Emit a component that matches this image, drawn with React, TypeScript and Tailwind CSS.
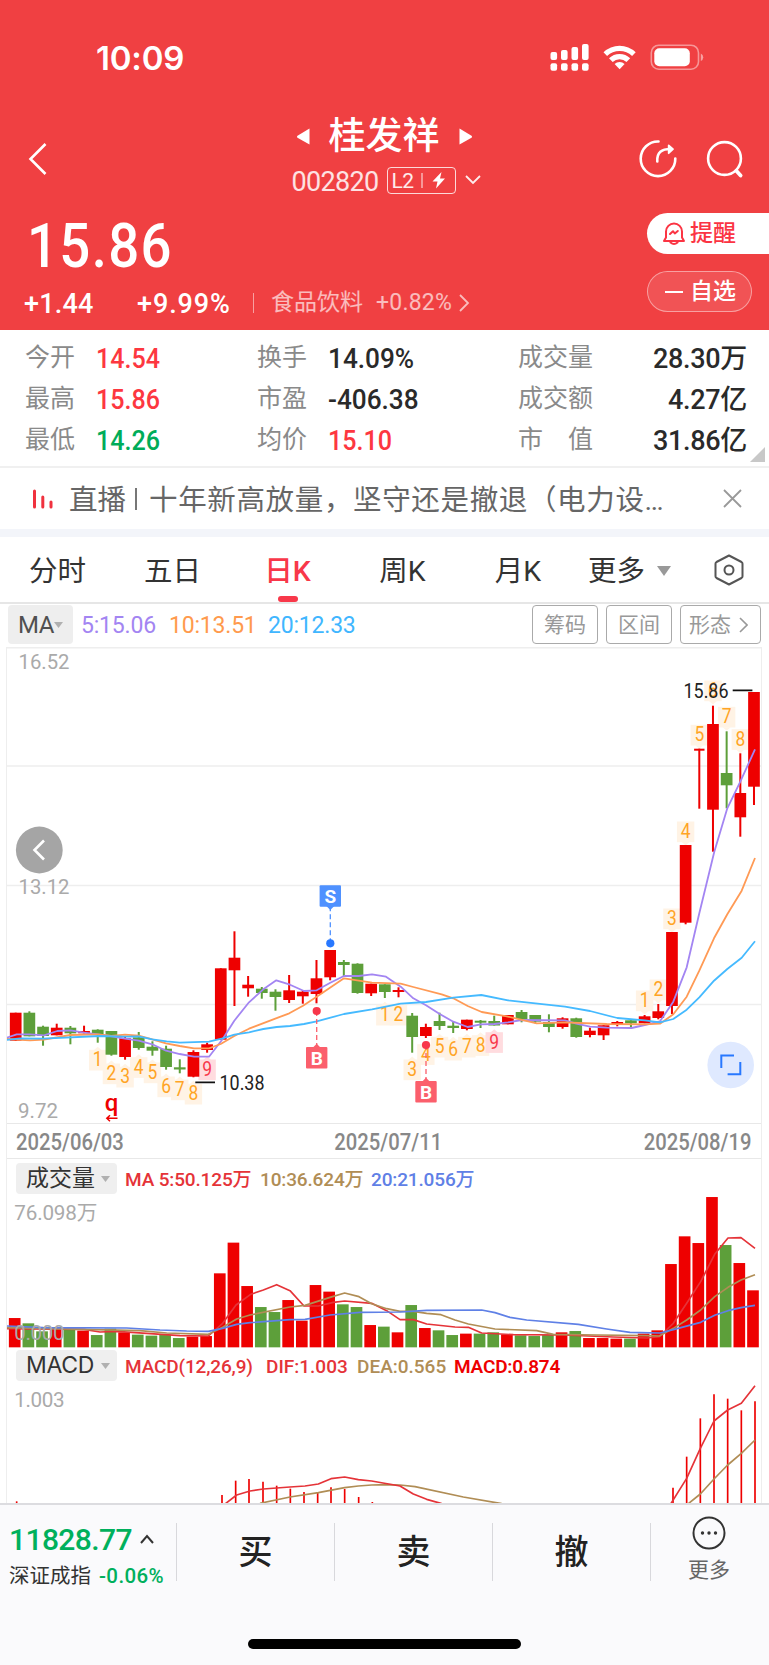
import React from "react";
import clsx from "clsx";

// --- Types ---
type Side = "up" | "down";

// top / bottom of the body, high / low of the wick
type Candle = [Side, number, number, number, number];

interface Quote {
  label: string;
  value: string;
  tone: string;
}

interface Signal {
  index: number;
  text: string;
  y: number;
  above?: boolean;
}

// --- Data ---
const RED = "#ee0000";
const GREEN = "#5d9f3a";
const STEP = 13.672;
const cx = (i: number) => 15.7 + i * STEP;

const quoteColumns: Quote[][] = [
  [
    { label: "今开", value: "14.54", tone: "text-[#fd3740]" },
    { label: "最高", value: "15.86", tone: "text-[#fd3740]" },
    { label: "最低", value: "14.26", tone: "text-[#00ac59]" },
  ],
  [
    { label: "换手", value: "14.09%", tone: "text-[#2a2a2a]" },
    { label: "市盈", value: "-406.38", tone: "text-[#2a2a2a]" },
    { label: "均价", value: "15.10", tone: "text-[#fd3740]" },
  ],
  [
    { label: "成交量", value: "28.30万", tone: "text-[#2a2a2a]" },
    { label: "成交额", value: "4.27亿", tone: "text-[#2a2a2a]" },
    { label: "市　值", value: "31.86亿", tone: "text-[#2a2a2a]" },
  ],
];

const candles: Candle[] = [
  ["up", 1012.7, 1040.7, 1012.7, 1041],
  ["down", 1012.7, 1036.3, 1011.3, 1036.3],
  ["down", 1026.7, 1036, 1025.7, 1045.7],
  ["up", 1027.7, 1035.3, 1023.7, 1035.3],
  ["down", 1027.7, 1033.3, 1026, 1044.3],
  ["up", 1031, 1033.3, 1025.7, 1033.3],
  ["down", 1029.7, 1035, 1029.3, 1042.7],
  ["down", 1031, 1054.7, 1031, 1055.7],
  ["up", 1038.3, 1057, 1036, 1059.7],
  ["down", 1037.3, 1048, 1032, 1049.7],
  ["down", 1046.7, 1050.7, 1041.3, 1055.7],
  ["down", 1048.7, 1067, 1045.7, 1069.7],
  ["down", 1067.3, 1069.5, 1059.3, 1073.3],
  ["up", 1052, 1076.7, 1050.3, 1077.3],
  ["up", 1044.3, 1050, 1042.7, 1052.7],
  ["up", 968.3, 1039.7, 968.3, 1039.7],
  ["up", 957.7, 970.3, 931.3, 1006],
  ["up", 984.7, 988.3, 976, 996.7],
  ["down", 988.7, 993, 987, 998.7],
  ["down", 991.7, 997, 989.3, 1010.7],
  ["up", 990.3, 1000, 975, 1003],
  ["up", 991.7, 996.3, 990, 1003.7],
  ["up", 978.3, 994, 960, 1003.3],
  ["up", 950, 977.3, 950, 980.3],
  ["down", 962, 965, 960, 976.7],
  ["down", 963.7, 993, 963.3, 993.7],
  ["up", 983.7, 993.3, 983.7, 996],
  ["down", 984.3, 992, 984.3, 998],
  ["up", 990, 992, 987.3, 997.3],
  ["down", 1015.7, 1037, 1013, 1052.7],
  ["up", 1027, 1036, 1023.7, 1038],
  ["down", 1021, 1026, 1012.7, 1030],
  ["down", 1025.7, 1028, 1022, 1033],
  ["up", 1019.7, 1029, 1019.7, 1030.3],
  ["down", 1020.7, 1022.7, 1020, 1028],
  ["down", 1021, 1025.5, 1015.7, 1025.5],
  ["up", 1015, 1024.3, 1015, 1024.3],
  ["down", 1012, 1019, 1010, 1022.3],
  ["down", 1015, 1021.7, 1015, 1023.3],
  ["down", 1022, 1027, 1014.3, 1032.3],
  ["up", 1018.3, 1027, 1017.3, 1028.7],
  ["down", 1018.3, 1037, 1017.7, 1037.7],
  ["up", 1030.7, 1035, 1027.7, 1037.3],
  ["up", 1025.3, 1035.3, 1025.3, 1040],
  ["up", 1022, 1024.7, 1021, 1026.3],
  ["down", 1020.3, 1023.3, 1020.3, 1027],
  ["up", 1016.3, 1023.3, 1015, 1023.3],
  ["up", 1011.3, 1018, 1004, 1019.3],
  ["up", 932, 1006, 932, 1014],
  ["up", 845, 922.7, 845, 924.3],
  ["up", 748.7, 750.7, 748.7, 808.7],
  ["up", 724, 809.7, 705.7, 851.7],
  ["down", 773, 785.3, 731.3, 808.3],
  ["up", 793, 817.3, 753.3, 836.7],
  ["up", 692, 786.7, 692, 805],
];

const ma5 =
  "6.7,1037.7 16.7,1034.3 30,1034.3 44,1035.3 57.3,1031 70.3,1030.3 84,1032.7 110,1036 125,1038.7 138.7,1040.7 152.3,1044.3 166,1050.7 179.7,1054 194,1056.7 209,1056.7 222.7,1039 234.3,1020.7 249,1002.3 263.3,989.3 276.3,980.3 290,984.7 304,991 316.7,990.3 330.3,982.7 344,976 358.7,976 372,974.3 386,976.7 400.7,986.7 413.3,998.3 426,1005.3 439.7,1014 453.3,1021.7 467.7,1027 480.7,1024.3 494.3,1024 508,1022.3 521.7,1020 565,1020.3 576.3,1023.7 590,1026.7 606.7,1027.7 631.7,1028 644.7,1025 660,1021.3 673.3,1001.7 686.7,967.3 699.3,913.3 714.3,851.7 727.3,808.3 740.3,781.7 755,749.3";
const ma10 =
  "6.7,1039 30,1040.3 44,1039.7 70.3,1035 97.7,1034.3 111.3,1036 125,1034.7 138.7,1035.7 152.3,1039.3 166,1043.3 179.7,1046 194,1048.3 209,1048.3 220.7,1044 234.3,1036 249,1028.7 275.3,1018.7 289.3,1013.3 303,1005.7 316.7,996.7 344,978.3 372,982.7 400.7,983.7 413.3,987 441.7,994.3 453.3,998.3 467.7,1006 481.7,1012 506.7,1016.3 536.7,1023.3 565,1022.3 606.7,1024 644.7,1024.3 660,1023.7 673.3,1014.3 686.7,996.7 699.3,970.7 714,938.3 727.3,914.3 741.7,890.7 755,858";
const ma20 =
  "6.7,1040 20,1038.3 43.3,1038.7 100,1036 125,1036.7 138.7,1036.3 152.3,1039.3 166.7,1041.3 179.7,1042.7 209,1041.7 222.7,1038.3 234.3,1034.7 249,1032.3 263.3,1029 276.7,1027 290,1026 304,1024 316.7,1021.3 344,1014 372,1009.3 400.7,1003.7 426,1002 453.3,997.7 481.3,995 508,1000.3 535.3,1003.3 565,1006.7 590,1011 617.3,1018 644.7,1020.3 660,1022.3 673.3,1019 686.7,1009.7 699.3,997.3 714,980.7 727.3,969 741.7,957.7 755,941.3";

const signals: Signal[] = [
  { index: 6, text: "1", y: 1066.3 },
  { index: 7, text: "2", y: 1080 },
  { index: 8, text: "3", y: 1083.3 },
  { index: 9, text: "4", y: 1073.7 },
  { index: 10, text: "5", y: 1079 },
  { index: 11, text: "6", y: 1093 },
  { index: 12, text: "7", y: 1096 },
  { index: 13, text: "8", y: 1100.3 },
  { index: 14, text: "9", y: 1076 },
  { index: 27, text: "1", y: 1021.3 },
  { index: 28, text: "2", y: 1021.3 },
  { index: 29, text: "3", y: 1076 },
  { index: 30, text: "4", y: 1060.7 },
  { index: 31, text: "5", y: 1053.3 },
  { index: 32, text: "6", y: 1056.3 },
  { index: 33, text: "7", y: 1053.3 },
  { index: 34, text: "8", y: 1051.7 },
  { index: 35, text: "9", y: 1048.7 },
  { index: 46, text: "1", y: 1007, above: true },
  { index: 47, text: "2", y: 996, above: true },
  { index: 48, text: "3", y: 925, above: true },
  { index: 49, text: "4", y: 838, above: true },
  { index: 50, text: "5", y: 741.3, above: true },
  { index: 51, text: "6", y: 697, above: true },
  { index: 52, text: "7", y: 723.3, above: true },
  { index: 53, text: "8", y: 745.7, above: true },
];

// bar heights, one for each candle
const volumes = [
  29.3, 24, 16, 18.3, 17.7, 16.7, 12.3, 18.7, 15, 12.7, 11.7, 12.3, 9.3, 10.7,
  11.3, 74, 104.7, 61.3, 40.3, 35.3, 47.3, 26.7, 62.3, 55.7, 43, 40.3, 22.3,
  20.7, 15, 42.3, 19.3, 17, 12.3, 13.7, 13.7, 15, 13, 12, 11.3, 12.3, 15, 16.3,
  9.3, 9.3, 8.7, 8.7, 13.7, 17, 83.3, 111, 104.3, 150.3, 102.3, 84.3, 57,
];

// volume and MACD panes are drawn on a grid three times finer than the page
const volMa5 =
  "20,656 252,658 300,666 350,664 540,677 625,678 668,640 708,585 752,553 790,540 830,524 870,542 912,588 955,588 1000,577 1034,573 1115,580 1160,602 1200,629 1240,629 1280,642 1365,651 1405,652 1445,669 1540,674 1690,675 1840,681 1940,684 1978,680 2020,640 2060,580 2102,515 2144,433 2184,384 2223,383 2265,415";
const volMa10 =
  "20,653 250,658 420,662 500,669 625,673 668,652 710,627 750,615 870,591 915,586 990,562 1034,549 1077,560 1115,581 1160,596 1200,604 1240,604 1280,610 1323,614 1365,630 1405,642 1485,657 1610,662 1660,673 1790,675 1940,677 1978,678 2020,655 2060,630 2102,600 2144,560 2184,532 2223,510 2265,494";
const volMa20 =
  "20,648 130,653 380,654 480,660 560,663 625,664 668,655 710,643 750,638 870,629 915,628 990,615 1080,607 1200,606 1280,601 1445,600 1485,608 1530,622 1580,630 1735,643 1820,657 1890,667 1980,669 2020,659 2102,637 2144,616 2184,602 2223,593 2265,586";

const macdBars: [number, number][] = [
  [50, 1174], [666, 1155], [707, 1112], [747, 1107], [789, 1115], [830, 1127],
  [871, 1136], [912, 1146], [953, 1147], [993, 1132], [1034, 1137],
  [1076, 1161], [1117, 1176], [2019, 1133], [2060, 1040], [2101, 925],
  [2142, 853], [2183, 866], [2224, 901], [2265, 874],
];
const dif = [
  "675,1182 710,1155 750,1143 790,1137 870,1131 915,1128 955,1122 993,1106 1034,1101 1075,1109 1115,1113 1200,1128 1240,1152 1280,1168 1325,1181",
  "2012,1182 2060,1105 2101,1015 2142,933 2183,900 2224,880 2265,827",
];
const dea = [
  "780,1180 870,1161 955,1148 1034,1133 1075,1128 1115,1125 1160,1124 1200,1125 1245,1130 1390,1161 1505,1181",
  "2065,1181 2101,1152 2142,1107 2183,1065 2224,1030 2265,990",
];

const tabs = [
  { name: "分时", cell: "w-[115px]" },
  { name: "五日", cell: "w-[115px]" },
  { name: "日K", cell: "w-[115px]", active: true },
  { name: "周K", cell: "w-[115px]" },
  { name: "月K", cell: "w-[116px]" },
];

// --- Components ---

const StatusBar = () => (
  <div className="flex h-[116px] items-start pl-[96px] pr-[65px] pt-[42px]">
    <span className="font-[Inter] text-[33px] leading-[33px] font-semibold tracking-[-0.200px]">
      10:09
    </span>
    <svg className="ml-auto" width="155" height="32" viewBox="550 42 155 32" fill="white">
      {[0, 1, 2, 3].map((i) => (
        <g key={i}>
          <rect x={551.5 + i * 10.5} y={52 - [0, 2, 5, 8][i]} width="6.6" height={8 + [0, 2, 5, 8][i]} rx="2" />
          <rect x={551.5 + i * 10.5} y="63.3" width="6.6" height="7.4" rx="2" />
        </g>
      ))}
      <path d="M604.5 52.3a23.2 23.2 0 0 1 32.2 0l-3.6 3.8a18 18 0 0 0-25 0z" />
      <path d="M610 58.2a15.3 15.3 0 0 1 21.200 0l-3.7 3.8a10 10 0 0 0-13.800 0z" />
      <path d="M615.600 64a7.300 7.300 0 0 1 10 0l-5 5.200z" />
      <rect x="652.300" y="45.200" width="47.200" height="24" rx="7.500" fill="none" stroke="white" strokeOpacity=".45" strokeWidth="1.600" />
      <rect x="655.300" y="48.200" width="35.500" height="18" rx="5" />
      <path d="M701.800 53.500q2.400 1 2.400 3.700t-2.400 3.700z" fillOpacity=".5" />
    </svg>
  </div>
);

const TitleBar = () => (
  <div className="flex h-[93px] items-start">
    <svg className="ml-[26px] mt-[25px]" width="26" height="36" viewBox="26 141 26 36" fill="none" stroke="white" strokeWidth="2.600">
      <path d="M45.500 144 30.500 159 45.500 174" />
    </svg>
    <div className="ml-[222px] flex w-[220px] flex-col items-center">
      <div className="flex h-[40px] items-center gap-[19px]">
        <svg width="13" height="17" viewBox="0 0 13 17" fill="white">
          <path d="M12.500.5v16L.5 9.700q-1-1 0-2z" />
        </svg>
        <span className="pt-[2px] text-[37px] leading-[40px] font-medium">桂发祥</span>
        <svg width="13" height="17" viewBox="0 0 13 17" fill="white">
          <path d="M.5.5v16l12-6.800q1-1 0-2z" />
        </svg>
      </div>
      <div className="mt-[10px] flex h-[28px] items-center pl-[5px]">
        <span className="pt-[3px] text-[27px] leading-7 tracking-[-0.700px] text-white/85">002820</span>
        <span className="ml-[9px] flex h-[27px] w-[69px] items-center rounded-[4px] border-[1.500px] border-white/80 pl-[3px]">
          <span className="pt-px text-[21px] leading-6 tracking-[-0.5px] text-white/90">L2</span>
          <svg width="36" height="22" viewBox="0 0 36 22">
            <path d="M8 4v15" stroke="white" strokeOpacity=".7" strokeWidth="1.300" />
            <path d="m27.500 3-9 9.500h5L22 19.500l9-10h-5z" fill="white" />
          </svg>
        </span>
        <svg className="ml-[9px]" width="16" height="10" viewBox="0 0 16 10" fill="none" stroke="white" strokeOpacity=".9" strokeWidth="1.800">
          <path d="m1 1 7 7 7-7" />
        </svg>
      </div>
    </div>
    <svg className="ml-[141px] mt-[20px]" width="112" height="46" viewBox="636 136 112 46" fill="none" stroke="white" strokeWidth="2.600" strokeLinecap="round">
      <path d="M659.500 141.500a17.300 17.300 0 1 0 16.800 17" />
      <path d="M658.300 161.500c-.5-9 4-12.700 14-12.500" />
      <path d="M669.700 145.500l4.300 3.700-4.300 4z" fill="white" strokeWidth="1.800" strokeLinejoin="round" />
      <circle cx="725.500" cy="158.500" r="16.400" />
      <path d="m737.300 170.800 4.300 4.700" strokeWidth="3.800" />
    </svg>
  </div>
);

const PriceBlock = () => (
  <div className="flex h-[121px]">
    <div className="w-[647px]">
      <div className="mt-[5px] ml-[27px] w-[200px] origin-left scale-x-[0.880] text-[62px] leading-[64px] font-medium tracking-[1.500px]">
        15.86
      </div>
      <div className="mt-[9px] flex h-[32px] items-center pl-[24px]">
        <span className="w-[113px] pt-[2px] text-[27px] font-medium tracking-[0.200px]">+1.44</span>
        <span className="w-[116px] pt-[2px] text-[27px] font-medium tracking-[0.900px]">+9.99%</span>
        <span className="h-5 w-px bg-white/50" />
        <span className="ml-[17px] text-[23px] text-white/65">食品饮料</span>
        <span className="ml-[13px] text-[23px] tracking-[0.200px] text-white/65">+0.82%</span>
        <svg className="ml-[6px]" width="12" height="18" viewBox="0 0 12 18" fill="none" stroke="white" strokeOpacity=".65" strokeWidth="1.800">
          <path d="m2 1 8 8-8 8" />
        </svg>
      </div>
    </div>
    <div className="flex w-[122px] flex-col pt-[4px]">
      <button className="flex h-[41px] items-center rounded-l-full bg-white pl-[15px] text-[23px] font-medium text-[#fb3443]">
        <svg className="mr-[4px]" width="24" height="25" viewBox="0 0 24 25" fill="none" stroke="currentColor" strokeWidth="2" strokeLinejoin="round" strokeLinecap="round">
          <path d="M4 16.500V10.500a8 8 0 0 1 16 0v6l2 3.500H2z" />
          <path d="M8.500 21.500q3.500 3 7 0" />
          <path d="m8 13 3-2.800 1.800 2.300 3-2.500" />
        </svg>
        <span className="pt-[2px]">提醒</span>
      </button>
      <button className="mt-[17px] flex h-[41px] w-[105px] items-center rounded-full border-[1.500px] border-white/45 bg-white/10 pl-[17px] text-[23px] font-medium">
        <span className="mr-[7px] h-[2px] w-[18px] bg-white" />
        <span className="pt-[2px]">自选</span>
      </button>
    </div>
  </div>
);

const Quotes = () => (
  <div className="relative flex h-[138px] border-b-2 border-[#f0f0f0] pt-[7px] pl-[25px]">
    {quoteColumns.map((col, c) => (
      <div key={c} className={["w-[232px]", "w-[261px]", "w-[229px]"][c]}>
        {col.map((q) => (
          <div key={q.label} className="flex h-[41px] items-center">
            <span className={clsx("text-[25px] leading-8 text-[#8a8a8a]", c < 2 && "w-[71px]")}>
              {q.label}
            </span>
            <span
              className={clsx(
                "pt-[3px] text-[27px] leading-8 font-medium",
                q.tone,
                c === 2 ? "ml-auto tracking-[-0.300px]" : "origin-left",
                q.value.length === 5 && c < 2 && "scale-x-[0.930]",
                q.value.length > 5 && c < 2 && "scale-x-[0.970]",
              )}
            >
              {q.value}
            </span>
          </div>
        ))}
      </div>
    ))}
    <svg className="absolute right-[4px] bottom-[4px]" width="15" height="15" viewBox="0 0 15 15" fill="#c8c8c8">
      <path d="M15 0v15H0z" />
    </svg>
  </div>
);

const Notice = () => (
  <div className="flex h-[61px] items-center">
    <svg className="ml-[32px]" width="22" height="20" viewBox="0 0 22 20" stroke="#f0323f" strokeWidth="3" strokeLinecap="round">
      <path d="M2.500 2v16M10.800 8v10M19 13v5" />
    </svg>
    <span className="ml-[15px] w-[610px] pt-[5px] text-[28.500px] leading-10 whitespace-nowrap text-[#666]">
      直播<span className="mx-[9px] inline-block h-[22px] w-[2px] bg-[#777]" />
      <span className="ml-[3px] tracking-[0.650px]">十年新高放量，坚守还是撤退（电力设…</span>
    </span>
    <svg className="ml-auto mr-[27px]" width="19" height="19" viewBox="0 0 19 19" stroke="#999" strokeWidth="1.800">
      <path d="m1 1 17 17M18 1 1 18" />
    </svg>
  </div>
);

const Tabs = () => (
  <div className="flex h-[67px] items-center border-b-2 border-[#e6e6e6] text-[28.500px] text-[#333]">
    {tabs.map((t) => (
      <div
        key={t.name}
        className={clsx("relative flex h-full items-center justify-center pt-[5px]", t.cell, t.active && "font-medium text-[#f8384a]")}
      >
        {t.name}
        {t.active && <span className="absolute bottom-0 h-[6px] w-5 rounded-[3px] bg-[#f8384a]" />}
      </div>
    ))}
    <span className="ml-[12px] pt-[5px]">更多</span>
    <svg className="ml-[12px] mt-[2px]" width="14" height="10" viewBox="0 0 14 10" fill="#999">
      <path d="M0 0h14L7 10z" />
    </svg>
    <svg className="ml-[43px]" width="30" height="32" viewBox="0 0 30 32" fill="none" stroke="#555" strokeWidth="2">
      <path d="M15 1.500 27.500 8q1 .6 1 1.800v12.400q0 1.200-1 1.800L15 30.500 2.500 24q-1-.6-1-1.800V9.800q0-1.200 1-1.800z" strokeLinejoin="round" />
      <circle cx="15" cy="16" r="4.500" />
    </svg>
  </div>
);

const Caret = () => (
  <svg width="9" height="6" viewBox="0 0 9 6" fill="#b0b0b0">
    <path d="M0 0h9L4.500 6z" />
  </svg>
);

const Toolbar = () => (
  <div className="flex h-[43px] items-start pt-[1px] pl-[8px]">
    <div className="flex h-[39px] w-[65px] items-center gap-[1px] rounded-[4px] bg-[#eeeeee] pl-[10px] text-[24px] tracking-[-0.500px] text-[#505050]">
      <span className="w-[35px] pt-px">MA</span>
      <Caret />
    </div>
    <div className="flex h-[39px] items-center pt-[3px] pl-[8px] text-[23px] tracking-[-0.200px]">
      <span className="w-[88px] text-[#a385f2]">5:15.06</span>
      <span className="w-[99px] text-[#ff9a4d]">10:13.51</span>
      <span className="text-[#40b6ff]">20:12.33</span>
    </div>
    <div className="ml-auto mr-[8px] flex gap-[8px] text-[21px] text-[#999]">
      <span className="flex h-[39px] w-[66px] items-center justify-center rounded-[4px] border-[1.500px] border-[#aaa] pt-[2px]">筹码</span>
      <span className="flex h-[39px] w-[66px] items-center justify-center rounded-[4px] border-[1.500px] border-[#aaa] pt-[2px]">区间</span>
      <span className="flex h-[39px] w-[81px] items-center justify-center gap-[8px] rounded-[4px] border-[1.500px] border-[#aaa] pr-[4px]">
        <span className="pt-[2px]">形态</span>
        <svg width="9" height="16" viewBox="0 0 9 16" fill="none" stroke="#999" strokeWidth="1.600">
          <path d="m1 1 7 7-7 7" />
        </svg>
      </span>
    </div>
  </div>
);

const TradeMark = ({ x, y, dot, letter }: { x: number; y: number; dot: number; letter: string }) => {
  const sell = letter === "S";
  const color = sell ? "#4f91ff" : "#fb5f6c";
  const tip = sell
    ? `M${x - 4} ${y + 10}L${x} ${y + 14}L${x + 4} ${y + 10}z`
    : `M${x - 4} ${y - 10}L${x} ${y - 14}L${x + 4} ${y - 10}z`;
  return (
    <g>
      <path d={`M${x} ${dot}V${y}`} stroke={color} strokeWidth="1.300" strokeDasharray="5 3" />
      <circle cx={x} cy={dot} r="4.100" fill={sell ? "#2878ff" : "#f8364a"} />
      <rect x={x - 10.700} y={y - 10.800} width="21.400" height="21.600" rx="1" fill={color} />
      <path d={tip} fill={color} />
      <text x={x} y={y + 7} fontSize="19" fontWeight="700" fill="white" textAnchor="middle">
        {letter}
      </text>
    </g>
  );
};

const CandleChart = () => (
  <svg className="block" width="754" height="476" viewBox="7 647 754 476">
    <g stroke="#eeeeee" strokeWidth="1.500">
      <path d="M7 647.700H761M7 766H761M7 885.500H761M7 1004.500H761" />
    </g>
    <g fontSize="21" fill="#aaaaaa">
      <text x="18.500" y="669" textLength="51" lengthAdjust="spacingAndGlyphs">16.52</text>
      <text x="18.500" y="893.500" textLength="51" lengthAdjust="spacingAndGlyphs">13.12</text>
      <text x="18" y="1118" textLength="40" lengthAdjust="spacingAndGlyphs">9.72</text>
    </g>

    {signals.map((s) => {
      const x = cx(s.index);
      const hot = s.text === "9";
      const bg = hot ? "#ffdcdf" : "#fff3e5";
      return (
        <g key={s.index}>
          <rect x={x - 8.700} y={s.y - 16.500} width="17.400" height="20.700" fill={bg} />
          <path
            d={s.above ? `M${x - 4} ${s.y + 4}h8l-4 3.500z` : `M${x - 4} ${s.y - 16}h8l-4 -3.500z`}
            fill={bg}
          />
          <text
            x={x - 4.900}
            y={s.y}
            fontSize="19.500"
            fill={hot ? "#f8384a" : "#ffa424"}
            textLength="9.800"
            lengthAdjust="spacingAndGlyphs"
          >
            {s.text}
          </text>
        </g>
      );
    })}

    {candles.map(([side, top, bottom, high, low], i) => {
      const fill = side === "up" ? RED : GREEN;
      const w = i === 50 ? 10.400 : 11.700;
      return (
        <g key={i} fill={fill}>
          <rect x={cx(i) - 1} y={high} width="2" height={low - high} />
          <rect x={cx(i) - w / 2} y={top} width={w} height={bottom - top} />
        </g>
      );
    })}

    <g fill="none" strokeWidth="1.800" strokeLinejoin="round">
      <polyline points={ma5} stroke="#a385f2" />
      <polyline points={ma10} stroke="#ff9a55" />
      <polyline points={ma20} stroke="#45baff" />
    </g>

    <g fontSize="20" fill="#222">
      <text x="683.500" y="697.500" textLength="45" lengthAdjust="spacingAndGlyphs">15.86</text>
      <text x="219.500" y="1090" textLength="45" lengthAdjust="spacingAndGlyphs">10.38</text>
    </g>
    <path d="M732.700 690.300h19.700M195.300 1082.300h19.700" stroke="#111" strokeWidth="1.800" />

    <TradeMark x={330.300} y={896} dot={943.300} letter="S" />
    <TradeMark x={316.700} y={1057.800} dot={1011} letter="B" />
    <TradeMark x={426} y={1091.800} dot={1045} letter="B" />

    <text x="111.500" y="1111" fontSize="24" fontWeight="500" fill={RED} textAnchor="middle">q</text>
    <path d="M117.500 1118.300H107M110 1115.300l-3.200 3 3.200 3" stroke={RED} strokeWidth="1.500" fill="none" />

    <circle cx="39.300" cy="850" r="23.400" fill="#a5a5a5" />
    <path d="m44 840.500-9.500 9.500 9.500 9.500" stroke="white" strokeWidth="2.600" fill="none" />
    <circle cx="730.700" cy="1065" r="23.300" fill="#dfe9ff" />
    <path d="M721.300 1068v-12.500h12.700M740.300 1062v12.300h-12.700" stroke="#2878ff" strokeWidth="2" fill="none" />
  </svg>
);

const Volume = () => (
  <>
    <div className="flex h-[36px] items-start pt-[4px] pl-[9px]">
      <div className="flex h-[31px] w-[101px] items-center gap-[6px] rounded-[4px] bg-[#efefef] pl-[10px] text-[23px] leading-[31px] text-[#333]">
        成交量
        <Caret />
      </div>
      <div className="flex h-[34px] items-center pl-[8px] text-[19px] font-medium tracking-[-0.150px]">
        <span className="w-[135px] text-[#e53338]">MA 5:50.125万</span>
        <span className="w-[111px] text-[#b08d55]">10:36.624万</span>
        <span className="text-[#5f80e6]">20:21.056万</span>
      </div>
    </div>
    <svg className="block" width="754" height="153" viewBox="21 255 2262 459">
      <rect x="18" y="675" width="3" height="37" fill={RED} />
      {volumes.map((v, i) => (
        <rect
          key={i}
          x={(cx(i) - 1) * 3 - 17.500}
          y={712 - v * 3}
          width="35"
          height={v * 3}
          fill={candles[i][0] === "up" ? RED : GREEN}
        />
      ))}
      <g fill="none" strokeWidth="5" strokeLinejoin="round">
        <polyline points={volMa5} stroke="#e53338" />
        <polyline points={volMa10} stroke="#b08d55" />
        <polyline points={volMa20} stroke="#5f80e6" />
      </g>
      <g fontSize="62" fill="#aaaaaa">
        <text x="43" y="330" textLength="249">76.098万</text>
        <text x="43" y="690" textLength="151">0.000</text>
      </g>
    </svg>
  </>
);

const Macd = () => (
  <>
    <div className="flex h-[34px] items-start pt-[2px] pl-[9px]">
      <div className="flex h-[31px] w-[101px] items-center gap-[6px] rounded-[4px] bg-[#efefef] pl-[10px] font-[Inter] text-[23px] tracking-[-0.300px] text-[#333]">
        <span className="w-[69px]">MACD</span>
        <Caret />
      </div>
      <div className="flex h-[35px] items-center pl-[8px] text-[19px] font-medium">
        <span className="w-[141px] tracking-[-0.150px] text-[#e53338]">MACD(12,26,9)</span>
        <span className="w-[91px] text-[#e53338]">DIF:1.003</span>
        <span className="w-[97px] text-[#b08d55]">DEA:0.565</span>
        <span className="font-semibold tracking-[-0.200px] text-[#ee0000]">MACD:0.874</span>
      </div>
    </div>
    <svg className="block" width="754" height="121" viewBox="21 816 2262 363">
      <g stroke={RED} strokeWidth="5">
        {macdBars.map(([x, y]) => (
          <path key={x} d={`M${x} ${y}V1179`} />
        ))}
      </g>
      <g fill="none" strokeWidth="5" strokeLinejoin="round">
        {dea.map((p) => (
          <polyline key={p} points={p} stroke="#b08d55" />
        ))}
        {dif.map((p) => (
          <polyline key={p} points={p} stroke="#e53338" />
        ))}
      </g>
      <text x="43" y="892" fontSize="62" fill="#aaaaaa" textLength="151">1.003</text>
    </svg>
  </>
);

const BottomBar = () => (
  <div className="h-[162px] border-t-2 border-[#dcdce0] bg-[#fafafc]">
    <div className="flex h-[94px] items-center">
      <div className="w-[176px] pt-[7px] pl-[9px]">
        <div className="flex items-center text-[30px] leading-[36px] font-medium tracking-[-0.600px] text-[#00b05c]">
          <span className="pt-[3px]">11828.77</span>
          <svg className="ml-[8px]" width="14" height="10" viewBox="0 0 14 10" fill="none" stroke="#333" strokeWidth="2">
            <path d="m1 9 6-7 6 7" />
          </svg>
        </div>
        <div className="flex items-center pt-[2px] text-[20.500px] leading-[32px] text-[#333]">
          深证成指
          <span className="ml-[8px] font-medium tracking-[0.400px] text-[#00b05c]">-0.06%</span>
        </div>
      </div>
      {["买", "卖", "撤"].map((name) => (
        <div key={name} className="flex h-[58px] w-[158px] items-center justify-center border-l border-[#d8d8dc] text-[34px] font-medium text-[#222]">
          {name}
        </div>
      ))}
      <div className="flex h-[58px] flex-1 flex-col items-center justify-center border-l border-[#d8d8dc] pr-[2px] pb-[4px] text-[21px] leading-[30px] text-[#666]">
        <svg className="mb-[5px] shrink-0" width="34" height="34" viewBox="0 0 34 34" fill="none" stroke="#333" strokeWidth="2">
          <circle cx="17" cy="17" r="15.500" />
          <path d="M10.500 17h.01M17 17h.01M23.500 17h.01" strokeWidth="3.400" strokeLinecap="round" />
        </svg>
        更多
      </div>
    </div>
    <div className="mx-auto mt-[40px] h-[10px] w-[273px] rounded-full bg-black" />
  </div>
);

export default function App() {
  return (
    <div className="w-[769px] overflow-hidden bg-white font-[Roboto,'Noto_Sans_CJK_SC',sans-serif]">
      <header className="h-[330px] bg-[#f04042] text-white">
        <StatusBar />
        <TitleBar />
        <PriceBlock />
      </header>
      <Quotes />
      <Notice />
      <div className="h-[8px] bg-[#f3f5fa]" />
      <Tabs />
      <Toolbar />
      <main className="ml-[6px] mr-[7px] border-x border-[#eeeeee]">
        <CandleChart />
        <div className="flex h-[36px] items-center justify-between border-y border-[#e8e8e8] px-[9px] pt-[4px] text-[23px] font-medium text-[#888]">
          <span className="origin-left scale-x-[0.880]">2025/06/03</span>
          <span className="ml-[8px] scale-x-[0.880]">2025/07/11</span>
          <span className="origin-right scale-x-[0.880]">2025/08/19</span>
        </div>
        <Volume />
        <Macd />
      </main>
      <BottomBar />
    </div>
  );
}
